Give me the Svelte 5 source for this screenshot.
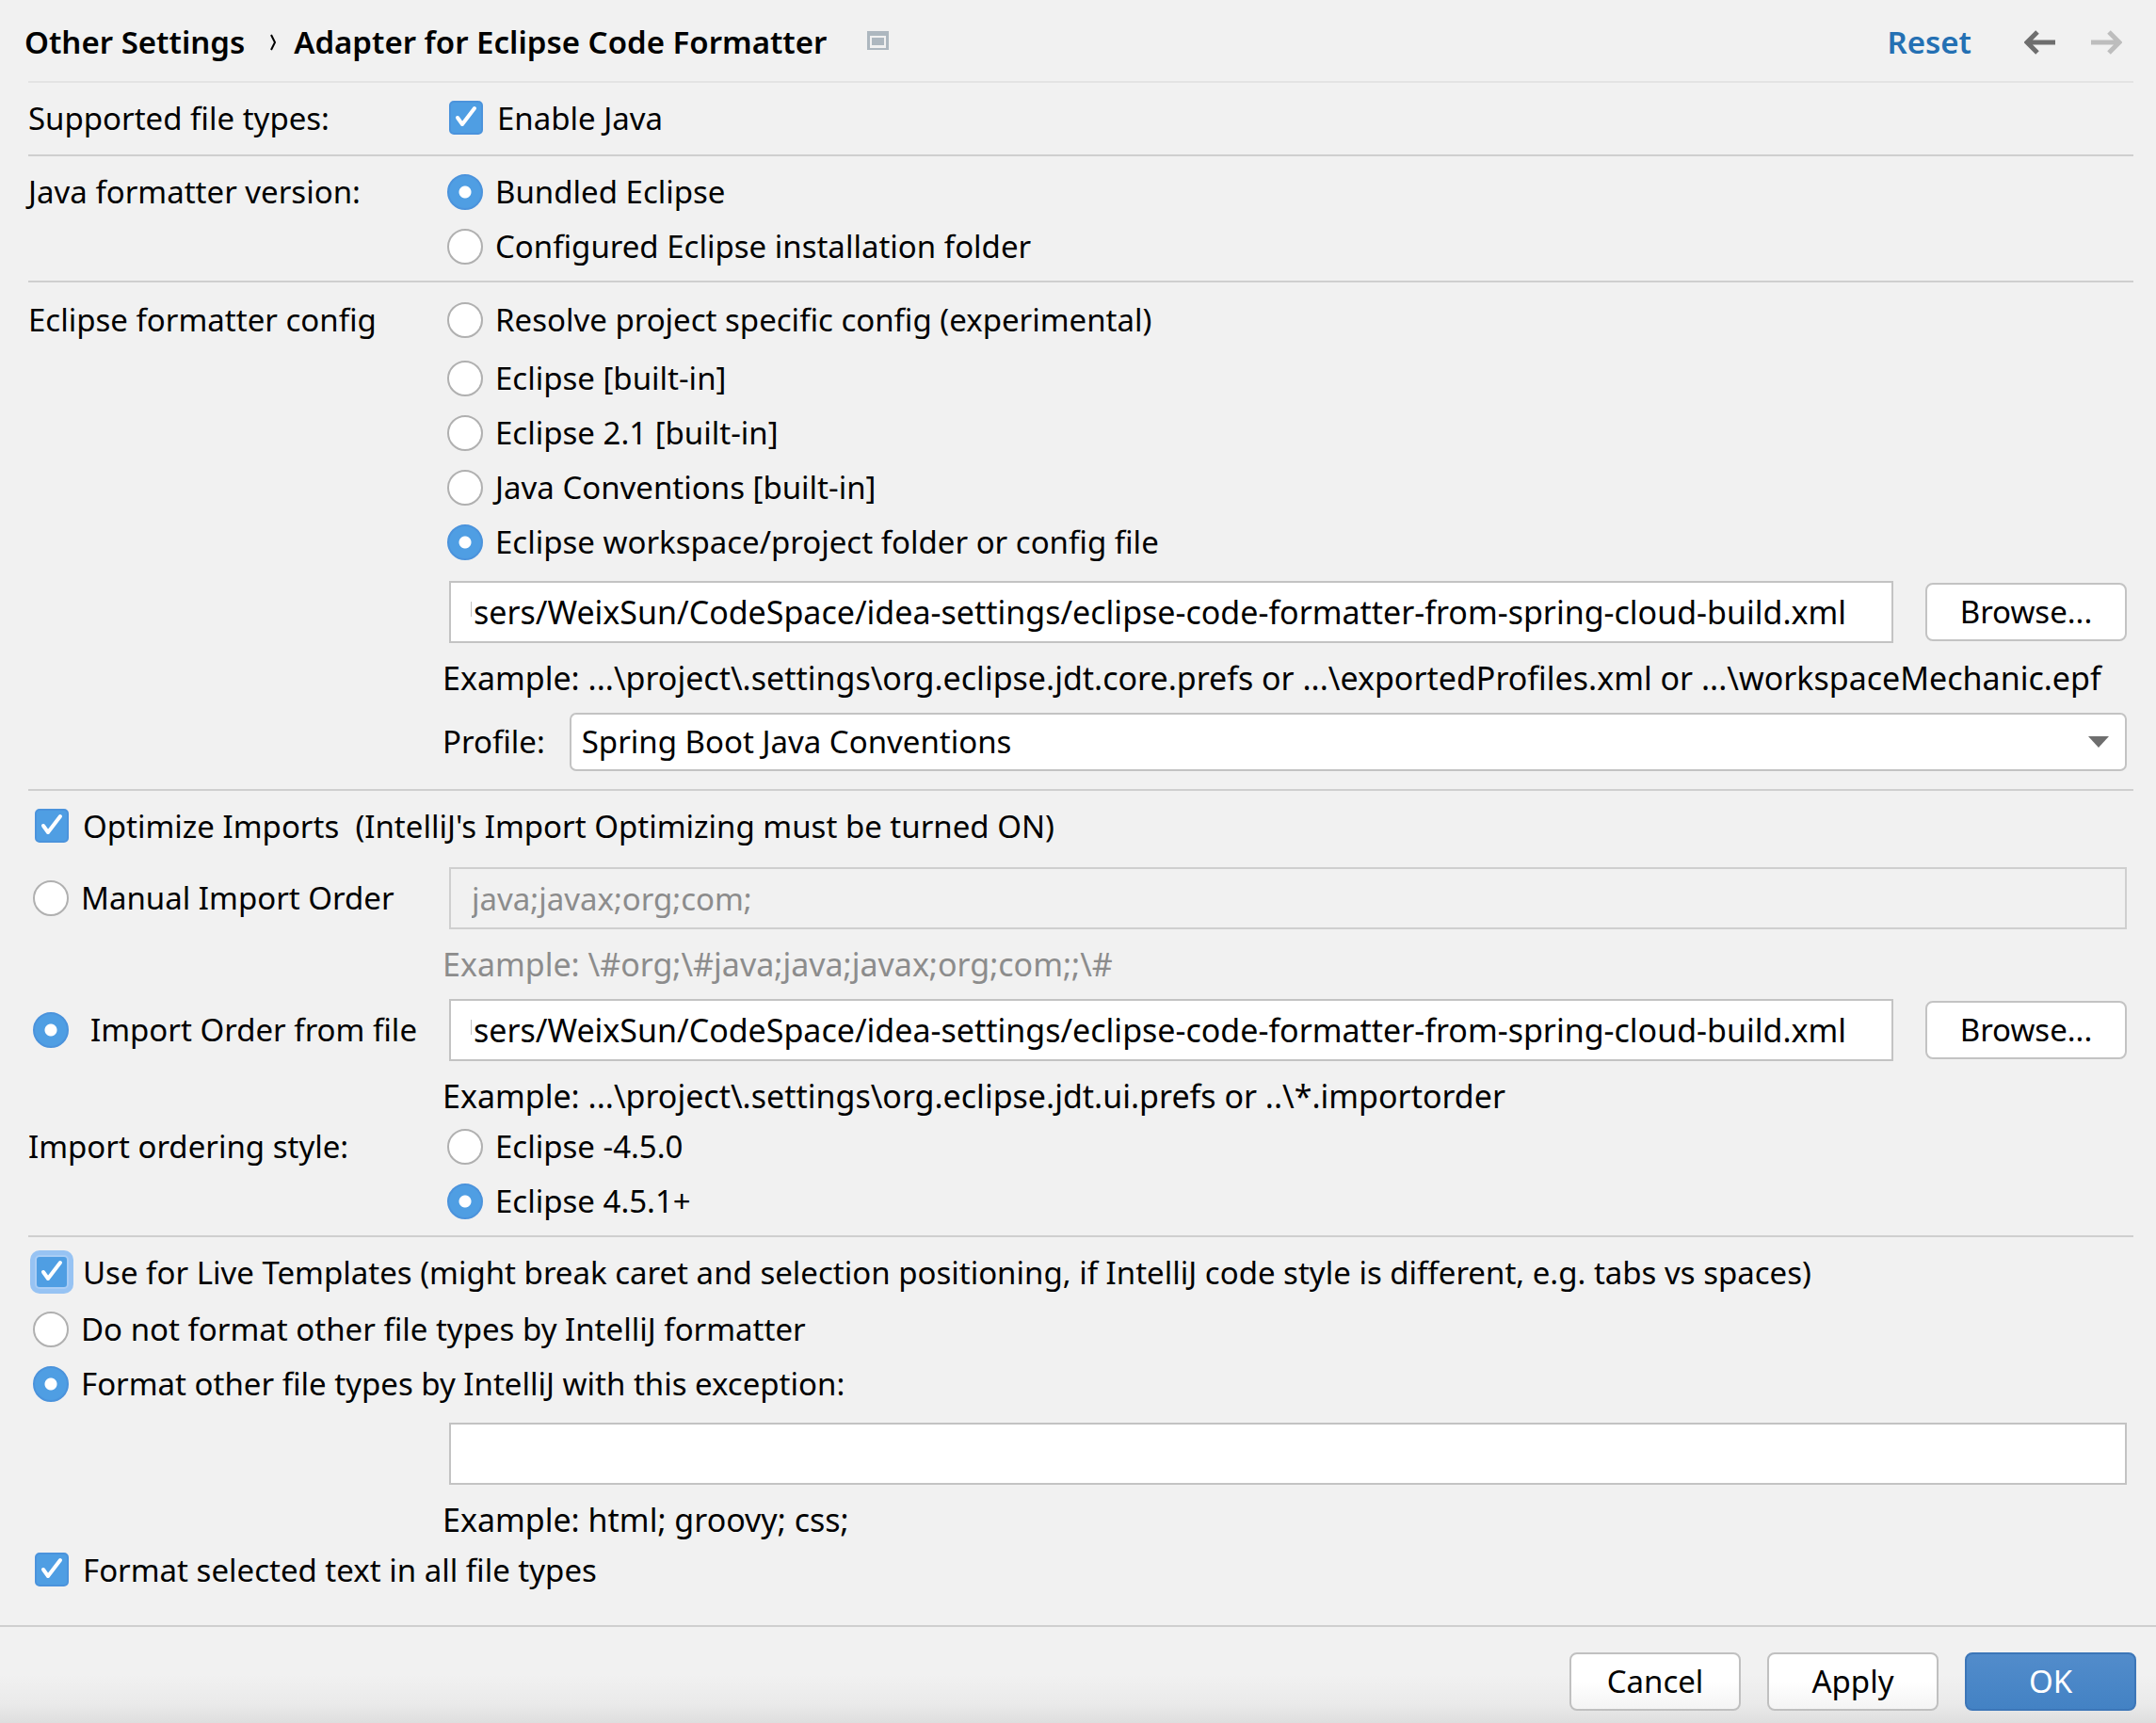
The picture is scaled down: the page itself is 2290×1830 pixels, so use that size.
<script>
  let supported = $state(true);
  let version = $state('bundled');
  let config = $state('workspace');
  let profile = $state('Spring Boot Java Conventions');
  let optimize = $state(true);
  let order = $state('file');
  let style = $state('new');
  let live = $state(true);
  let others = $state('format');
  let selected = $state(true);
  let exceptions = $state('');
  let manualOrder = $state('java;javax;org;com;');

  const filePath = 'sers/WeixSun/CodeSpace/idea-settings/eclipse-code-formatter-from-spring-cloud-build.xml';
  let configPath = $state(filePath);
  let orderPath = $state(filePath);

  const builtIns = [
    { value: 'eclipse', label: 'Eclipse [built-in]' },
    { value: 'eclipse21', label: 'Eclipse 2.1 [built-in]' },
    { value: 'java', label: 'Java Conventions [built-in]' },
    { value: 'workspace', label: 'Eclipse workspace/project folder or config file' }
  ];
</script>

<div class="dialog">
  <header>
    <h1>
      <span>Other Settings</span>
      <svg class="chevron" viewBox="0 0 8 18" aria-hidden="true"><path d="M2 1 6 9 2 17" /></svg>
      <span>Adapter for Eclipse Code Formatter</span>
    </h1>
    <svg class="scope" viewBox="0 0 23 20" aria-hidden="true">
      <path fill="#adb7bf" fill-rule="evenodd" d="M0 0h23v20H0zM3 5v13h17V5z" />
      <path fill="#adb7bf" d="M5 7h13v8H5z" />
    </svg>
    <a class="reset" href="#reset">Reset</a>
    <button class="nav" aria-label="Back">
      <svg viewBox="0 0 34 26" aria-hidden="true"><path d="M33 13H3M14 2 3 13l11 11" /></svg>
    </button>
    <button class="nav next" aria-label="Forward" disabled>
      <svg viewBox="0 0 34 26" aria-hidden="true"><path d="M1 13h30M20 2l11 11-11 11" /></svg>
    </button>
  </header>

  <main>
    <section class="types">
      <span class="row">Supported file types:</span>
      <label class="row check"><input type="checkbox" bind:checked={supported} />Enable Java</label>
    </section>

    <section class="version">
      <span class="row">Java formatter version:</span>
      <div>
        <label class="row radio"><input type="radio" name="version" value="bundled" bind:group={version} />Bundled Eclipse</label>
        <label class="row radio"><input type="radio" name="version" value="custom" bind:group={version} />Configured Eclipse installation folder</label>
      </div>
    </section>

    <section class="config">
      <span class="row">Eclipse formatter config</span>
      <div>
        <label class="row radio first"><input type="radio" name="config" value="resolve" bind:group={config} />Resolve project specific config (experimental)</label>
        {#each builtIns as item}
          <label class="row radio"><input type="radio" name="config" value={item.value} bind:group={config} />{item.label}</label>
        {/each}
        <div class="field">
          <input class="text path" type="text" aria-label="Config file" bind:value={configPath} />
          <button class="btn browse">Browse...</button>
        </div>
        <p class="example">Example: ...\project\.settings\org.eclipse.jdt.core.prefs or ...\exportedProfiles.xml or ...\workspaceMechanic.epf</p>
        <div class="profile">
          <label for="profile">Profile:</label>
          <div class="combo">
            <select id="profile" bind:value={profile}>
              <option>Spring Boot Java Conventions</option>
            </select>
            <svg viewBox="0 0 22 12" aria-hidden="true"><path d="M0 0h22L11 12z" /></svg>
          </div>
        </div>
      </div>
    </section>

    <section class="imports">
      <label class="row check wide"><input type="checkbox" bind:checked={optimize} />Optimize Imports&nbsp; (IntelliJ's Import Optimizing must be turned ON)</label>
      <label class="radio tall"><input type="radio" name="order" value="manual" bind:group={order} />Manual Import Order</label>
      <div>
        <div class="field">
          <input class="text" type="text" aria-label="Manual import order" disabled bind:value={manualOrder} />
        </div>
        <p class="example dim">Example: \#org;\#java;java;javax;org;com;;\#</p>
      </div>
      <label class="radio tall spaced"><input type="radio" name="order" value="file" bind:group={order} />Import Order from file</label>
      <div>
        <div class="field">
          <input class="text path" type="text" aria-label="Import order file" bind:value={orderPath} />
          <button class="btn browse">Browse...</button>
        </div>
        <p class="example">Example: ...\project\.settings\org.eclipse.jdt.ui.prefs or ..\*.importorder</p>
      </div>
      <span class="row">Import ordering style:</span>
      <div>
        <label class="row radio"><input type="radio" name="style" value="old" bind:group={style} />Eclipse -4.5.0</label>
        <label class="row radio"><input type="radio" name="style" value="new" bind:group={style} />Eclipse 4.5.1+</label>
      </div>
    </section>

    <section class="other">
      <label class="row check wide focused"><input type="checkbox" bind:checked={live} />Use for Live Templates (might break caret and selection positioning, if IntelliJ code style is different, e.g. tabs vs spaces)</label>
      <label class="row radio wide"><input type="radio" name="others" value="skip" bind:group={others} />Do not format other file types by IntelliJ formatter</label>
      <label class="row radio wide"><input type="radio" name="others" value="format" bind:group={others} />Format other file types by IntelliJ with this exception:</label>
      <div class="second">
        <div class="field">
          <input class="text" type="text" aria-label="File type exceptions" bind:value={exceptions} />
        </div>
        <p class="example">Example: html; groovy; css;</p>
      </div>
      <label class="row check wide"><input type="checkbox" bind:checked={selected} />Format selected text in all file types</label>
    </section>
  </main>

  <footer>
    <button class="btn">Cancel</button>
    <button class="btn">Apply</button>
    <button class="btn ok">OK</button>
  </footer>
</div>

<style>
  :global(body) {
    background: #f1f1f1;
  }
  .dialog {
    display: flex;
    flex-direction: column;
    min-height: 100vh;
    font-family: 'Noto Sans', 'Open Sans', sans-serif;
    font-size: 33px;
    line-height: 44px;
    color: #000;
    white-space: nowrap;
    background: #f1f1f1;
  }
  .dialog * {
    box-sizing: border-box;
  }
  input, select, button {
    font: inherit;
    color: inherit;
    margin: 0;
  }

  header {
    display: flex;
    align-items: center;
    height: 88px;
    margin: 0 24px 0 30px;
    padding-top: 4px;
    border-bottom: 2px solid #e3e3e3;
  }
  h1 {
    display: flex;
    align-items: center;
    margin: 0 0 0 -4px;
    font-size: 33px;
    font-weight: 600;
  }
  .chevron {
    width: 8px;
    height: 18px;
    margin: 0 18px 0 26px;
    fill: none;
    stroke: #000;
    stroke-width: 2;
  }
  .scope {
    width: 23px;
    height: 20px;
    margin: 0 0 4px 43px;
  }
  .reset {
    margin-left: auto;
    font-weight: 600;
    color: #2470b3;
    text-decoration: none;
  }
  .nav {
    width: 34px;
    height: 26px;
    margin-left: 56px;
    padding: 0;
    border: 0;
    background: none;
    color: #6e6e6e;
  }
  .next {
    margin: 0 12px 0 36px;
    color: #bdbdbd;
  }
  .nav svg {
    display: block;
    width: 34px;
    height: 26px;
    fill: none;
    stroke: currentColor;
    stroke-width: 5;
  }

  main {
    flex: 1;
    padding: 0 24px 0 30px;
  }
  section {
    display: grid;
    grid-template-columns: 440px 1fr;
    align-items: start;
    align-content: start;
    border-bottom: 2px solid #cfcfcf;
  }
  section:last-child {
    border-bottom: 0;
  }
  .types { padding: 9px 0; }
  .version { padding: 9px 0 7px; }
  .config { padding: 11px 0 19px; }
  .imports { padding: 9px 0 7px; }
  .other { padding: 9px 0 28px; }

  .row {
    display: flex;
    align-items: center;
    height: 58px;
  }
  .radio {
    padding-left: 5px;
  }
  .check {
    padding-left: 7px;
  }
  .first {
    margin-bottom: 4px;
  }
  .wide {
    grid-column: 1 / -1;
  }
  .tall {
    display: flex;
    align-items: center;
    height: 66px;
  }
  .imports > .wide {
    margin-bottom: 14px;
  }
  .focused {
    margin-bottom: 2px;
  }

  input[type='radio'], input[type='checkbox'] {
    appearance: none;
    flex: none;
    background: #fff;
    border: 2px solid #b0b0b0;
  }
  input[type='radio'] {
    width: 38px;
    height: 38px;
    margin-right: 13px;
    border-radius: 50%;
  }
  .spaced input[type='radio'] {
    margin-right: 23px;
  }
  input[type='radio']:checked {
    border-color: #4b93dc;
    background: radial-gradient(circle, #fff 6px, #4f9ee3 7px);
  }
  input[type='checkbox'] {
    width: 36px;
    height: 36px;
    margin: 0 15px 2px 0;
    border-radius: 5px;
  }
  input[type='checkbox']:checked {
    border-color: #4b93dc;
    background: #4f9ee3 url("data:image/svg+xml,%3Csvg xmlns='http://www.w3.org/2000/svg' viewBox='0 0 32 32'%3E%3Cpath d='M7 16l5 7L25 6' fill='none' stroke='white' stroke-width='4' stroke-linecap='round' stroke-linejoin='round'/%3E%3C/svg%3E") center / 32px 32px;
  }
  .focused input[type='checkbox'] {
    border-color: #a9cdf5;
    box-shadow: 0 0 0 5px #97c3f3;
  }

  .field {
    display: flex;
    align-items: center;
    gap: 34px;
    margin: 0 7px;
  }
  .config .field, .second .field {
    margin-top: 12px;
  }
  .text {
    flex: 1;
    min-width: 0;
    height: 66px;
    padding: 0 22px;
    border: 2px solid #c3c3c3;
    border-radius: 0;
    background: #fff;
  }
  .path {
    padding: 0 24px;
    font-size: 34px;
    background: linear-gradient(#c3c3c3, #c3c3c3) 21px 20px / 1px 16px no-repeat #fff;
  }
  .text:disabled {
    border-color: #cfcfcf;
    background: #f1f1f1;
    color: #8c8c8c;
  }
  .btn {
    width: 182px;
    height: 62px;
    padding: 0;
    border: 2px solid #c3c3c3;
    border-radius: 8px;
    background: #fff;
  }
  .browse {
    width: 214px;
  }
  .example {
    margin: 12px 0 0;
    font-size: 34px;
    line-height: 50px;
  }
  .dim {
    margin-bottom: 12px;
    color: #8c8c8c;
  }
  .second {
    grid-column: 2;
  }

  .profile {
    display: flex;
    align-items: center;
    gap: 26px;
    margin: 12px 7px 0 0;
  }
  .combo {
    flex: 1;
    display: grid;
    align-items: center;
  }
  .combo select, .combo svg {
    grid-area: 1 / 1;
  }
  select {
    appearance: none;
    width: 100%;
    height: 62px;
    padding: 0 11px;
    border: 2px solid #c3c3c3;
    border-radius: 7px;
    background: #fff;
  }
  .combo svg {
    width: 22px;
    height: 12px;
    margin-right: 19px;
    justify-self: end;
    fill: #6e6e6e;
    pointer-events: none;
  }

  footer {
    display: flex;
    justify-content: flex-end;
    gap: 28px;
    padding: 27px 21px 13px;
    border-top: 2px solid #cfcfcf;
    background: linear-gradient(#f1f1f1 50%, #eaeaea 80%, #dedede);
  }
  footer .btn {
    border-color: #c0c0c0;
    background: linear-gradient(#fff 50%, #f4f4f4);
  }
  footer .ok {
    border-color: #3c76b8;
    background: linear-gradient(#528ccb, #4382c4);
    color: #fff;
  }
</style>
